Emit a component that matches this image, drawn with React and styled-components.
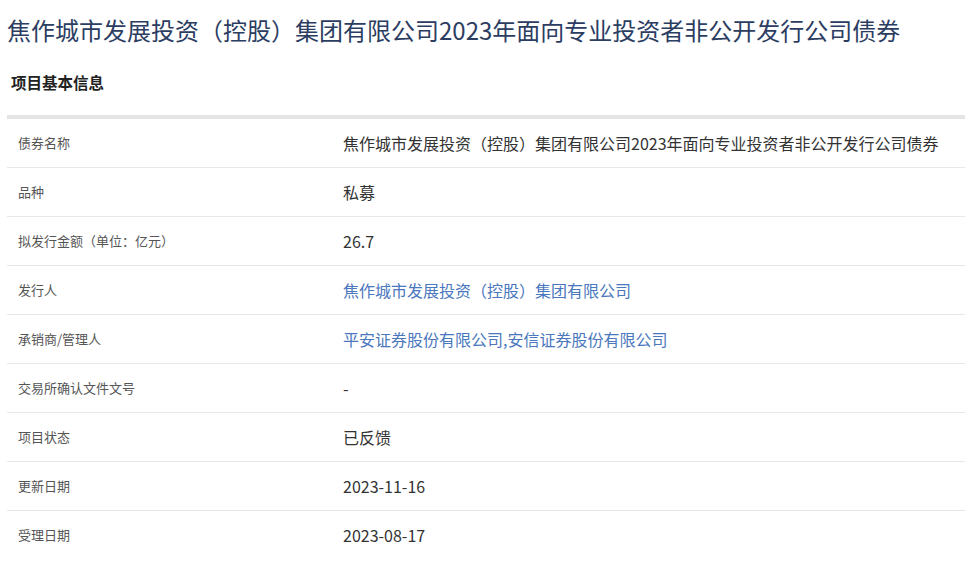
import React from "react";
import styled, { createGlobalStyle } from "styled-components";

const GlobalStyle = createGlobalStyle`
  body {
    margin: 0;
    background: #ffffff;
    font-family: "Noto Sans CJK SC", "Noto Sans", sans-serif;
  }
`;

const Page = styled.div`
  padding: 13px 0 0 7px;
`;

const Title = styled.h1`
  margin: 0;
  font-size: 24px;
  line-height: 34px;
  font-weight: 400;
  color: #2c3d62;
  white-space: nowrap;
`;

const SectionTitle = styled.h3`
  margin: 23px 0 0 4px;
  font-size: 15.5px;
  line-height: 24px;
  font-weight: 700;
  color: #222;
`;

const Table = styled.div`
  margin-top: 21px;
  border-top: 4px solid #e4e4e4;
`;

const Row = styled.div`
  display: grid;
  grid-template-columns: 336px 1fr;
  align-items: center;
  height: 48px;
  border-bottom: ${({ $last }) => ($last ? "none" : "1px solid #e8e8e8")};
`;

const Label = styled.div`
  padding-left: 11px;
  font-size: 13px;
  color: #555;
  transform: translateY(-1px);
`;

const Value = styled.div`
  font-size: 16px;
  color: ${({ $link }) => ($link ? "#4a77bd" : "#333")};
  white-space: nowrap;
`;

const rows = [
  { label: "债券名称", value: "焦作城市发展投资（控股）集团有限公司2023年面向专业投资者非公开发行公司债券" },
  { label: "品种", value: "私募" },
  { label: "拟发行金额（单位：亿元）", value: "26.7" },
  { label: "发行人", value: "焦作城市发展投资（控股）集团有限公司", link: true },
  { label: "承销商/管理人", value: "平安证券股份有限公司,安信证券股份有限公司", link: true },
  { label: "交易所确认文件文号", value: "-" },
  { label: "项目状态", value: "已反馈" },
  { label: "更新日期", value: "2023-11-16" },
  { label: "受理日期", value: "2023-08-17" },
];

export default function App() {
  return (
    <Page>
      <GlobalStyle />
      <Title>焦作城市发展投资（控股）集团有限公司2023年面向专业投资者非公开发行公司债券</Title>
      <SectionTitle>项目基本信息</SectionTitle>
      <Table>
        {rows.map((r, i) => (
          <Row key={r.label} $last={i === rows.length - 1}>
            <Label>{r.label}</Label>
            <Value $link={r.link}>{r.value}</Value>
          </Row>
        ))}
      </Table>
    </Page>
  );
}
